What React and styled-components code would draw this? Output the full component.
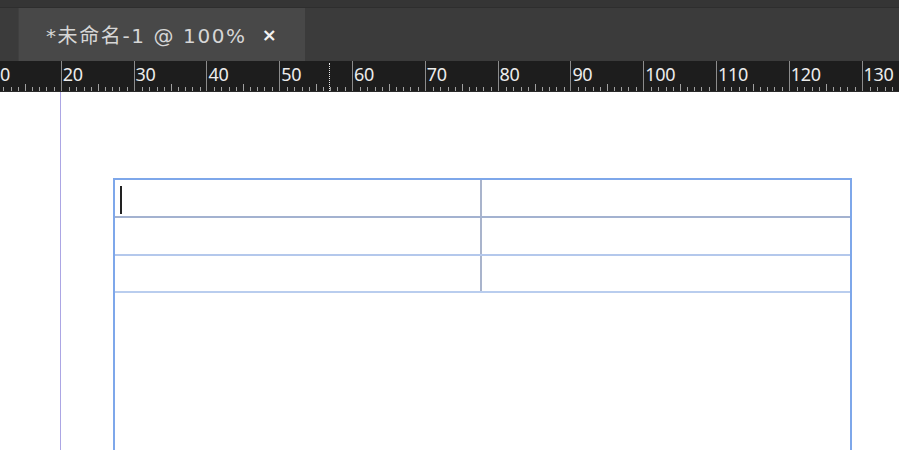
import React from 'react';
import styled, { createGlobalStyle } from 'styled-components';

const GlobalStyle = createGlobalStyle`
    html, body {
        margin: 0;
        padding: 0;
        background: #ffffff;
        overflow: hidden;
    }
    #root {
        width: 899px;
        height: 450px;
    }
`;

const UNIT = 71.8;

const Window = styled.div`
    width: 899px;
    height: 450px;
    display: flex;
    flex-direction: column;
    font-family: "Noto Sans", "Noto Sans CJK SC", sans-serif;
`;

const TopStrip = styled.div`
    height: 7px;
    background: #353535;
    border-bottom: 1px solid #2e2e2e;
`;

const TabBar = styled.div`
    height: 53px;
    background: #3b3b3b;
    display: flex;
    align-items: stretch;
    padding-left: 18px;
`;

const Tab = styled.div`
    width: 287px;
    background: #484848;
    border-left: 1px solid #404040;
    display: flex;
    align-items: center;
    padding-left: 27px;
    box-sizing: border-box;
    gap: 15px;
    color: #d6d6d6;
    font-family: "DejaVu Sans", "Noto Sans CJK SC", sans-serif;
    font-size: 20px;
    letter-spacing: 1.6px;
`;

const Close = styled.span`
    color: #f2f2f2;
    font-size: 18px;
    font-weight: bold;
`;

const Ruler = styled.div`
    position: relative;
    height: 30px;
    background: #1d1d1d;
    display: flex;
    overflow: hidden;
    border-bottom: 1px solid #2a2a2a;
`;

const Segment = styled.div`
    flex: 0 0 ${UNIT}px;
    margin-left: ${(p) => (p.$first ? '-12px' : '0')};
    box-sizing: border-box;
    border-left: 1px solid #8c8c8c;
    display: flex;
    flex-direction: column;
    justify-content: space-between;
`;

const Label = styled.span`
    color: #ececec;
    font-family: "Noto Sans", sans-serif;
    font-size: 18px;
    line-height: 18px;
    letter-spacing: -0.3px;
    padding: 4px 0 0 1px;
`;

const Marker = styled.div`
    position: absolute;
    left: 329px;
    top: 2px;
    bottom: 0;
    border-left: 1px dotted #e8e8e8;
`;

const Canvas = styled.div`
    position: relative;
    flex: 1;
    background: #ffffff;
    padding: 86px 0 0 113px;
    overflow: hidden;
`;

const Guide = styled.div`
    position: absolute;
    left: 60px;
    top: 0;
    bottom: 0;
    width: 1px;
    background: #aca6e4;
`;

const Table = styled.div`
    width: 739px;
    height: 300px;
    box-sizing: border-box;
    border: 2px solid #7ea7ea;
    border-bottom: none;
    display: flex;
    flex-direction: column;
`;

const Row = styled.div`
    height: ${(p) => p.$h}px;
    display: grid;
    grid-template-columns: 367px 1fr;
    border-bottom: 2px solid ${(p) => p.$line};
`;

const Cell = styled.div`
    position: relative;
    border-right: ${(p) => (p.$divider ? '2px solid #a9b4cc' : 'none')};
`;

const Caret = styled.div`
    position: absolute;
    left: 5px;
    top: 6px;
    width: 2px;
    height: 28px;
    background: #222;
`;

const Ticks = () => (
    <svg width={UNIT} height="8" style={{ display: 'block' }}>
        {Array.from({ length: 10 }, (_, i) => {
            if (i === 0) return null;
            const x = Math.round(i * 7.18) + 0.5;
            const h = i === 5 ? 7 : 4;
            return <line key={i} x1={x} x2={x} y1={8 - h} y2={8} stroke="#a0a0a0" strokeWidth="1" />;
        })}
    </svg>
);

const labels = [10, 20, 30, 40, 50, 60, 70, 80, 90, 100, 110, 120, 130];

const rows = [
    { h: 36, line: '#a3b2d0', caret: true },
    { h: 36, line: '#b4c8ec' },
    { h: 35, line: '#b9cdee' },
];

export default function App() {
    return (
        <Window>
            <GlobalStyle />
            <TopStrip />
            <TabBar>
                <Tab>
                    <span>*未命名-1 @ 100%</span>
                    <Close>×</Close>
                </Tab>
            </TabBar>
            <Ruler>
                {labels.map((n, i) => (
                    <Segment key={n} $first={i === 0}>
                        <Label>{n}</Label>
                        <Ticks />
                    </Segment>
                ))}
                <Marker />
            </Ruler>
            <Canvas>
                <Guide />
                <Table>
                    {rows.map((r, i) => (
                        <Row key={i} $h={r.h} $line={r.line}>
                            <Cell $divider>{r.caret && <Caret />}</Cell>
                            <Cell />
                        </Row>
                    ))}
                </Table>
            </Canvas>
        </Window>
    );
}
